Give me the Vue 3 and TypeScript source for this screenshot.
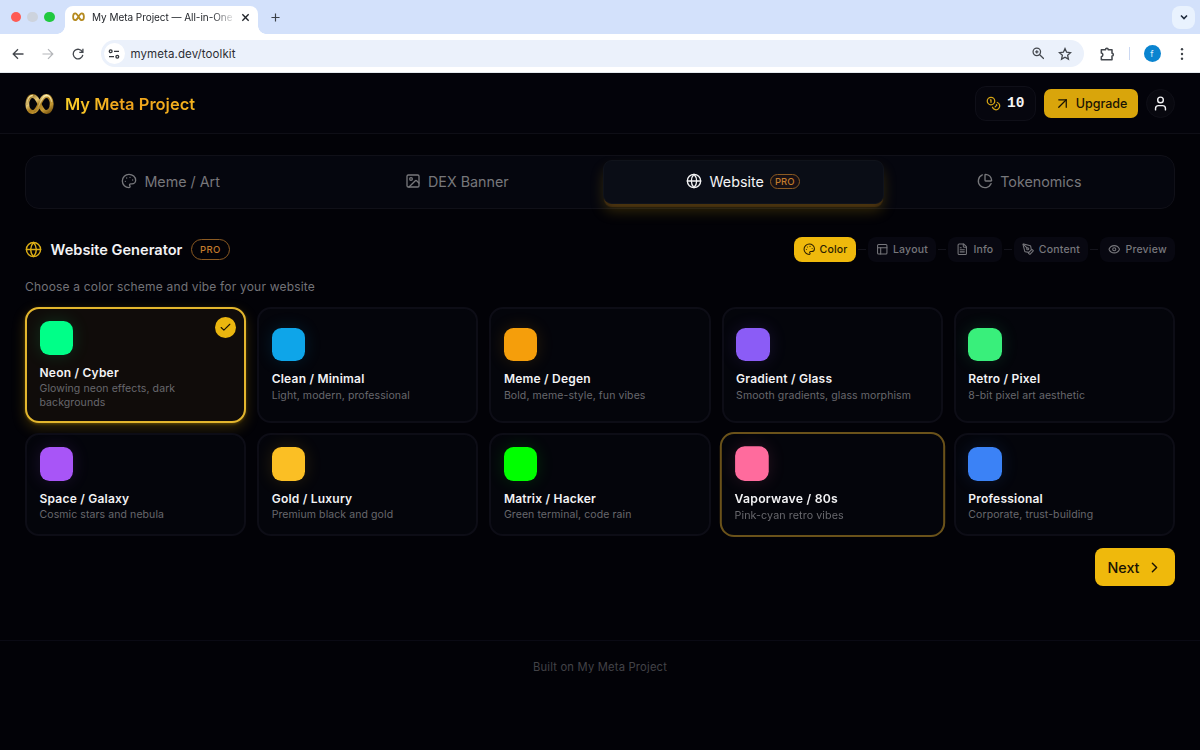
<script setup lang="ts">
type IconName =
  | 'palette' | 'image' | 'globe' | 'chart' | 'layout' | 'file' | 'pen'
  | 'eye' | 'coins' | 'arrow' | 'user' | 'check' | 'chevron'

const icons: Record<IconName, string[]> = {
  palette: [
    'M13.5 6.5h.01', 'M17.5 10.5h.01', 'M8.5 7.5h.01', 'M6.5 12.5h.01',
    'M12 2C6.5 2 2 6.5 2 12s4.5 10 10 10c.926 0 1.648-.746 1.648-1.688 0-.437-.18-.835-.437-1.125-.29-.289-.438-.652-.438-1.125a1.64 1.64 0 0 1 1.668-1.668h1.996c3.051 0 5.555-2.503 5.555-5.554C21.965 6.012 17.461 2 12 2z',
  ],
  image: [
    'M5 3h14a2 2 0 0 1 2 2v14a2 2 0 0 1-2 2H5a2 2 0 0 1-2-2V5a2 2 0 0 1 2-2z',
    'M7 9a2 2 0 1 0 4 0a2 2 0 1 0-4 0', 'm21 15-3.086-3.086a2 2 0 0 0-2.828 0L6 21',
  ],
  globe: ['M2 12a10 10 0 1 0 20 0a10 10 0 1 0-20 0', 'M12 2a14.5 14.5 0 0 0 0 20 14.5 14.5 0 0 0 0-20', 'M2 12h20'],
  chart: [
    'M21 12c.552 0 1.005-.449.95-.998a10 10 0 0 0-8.953-8.951c-.55-.055-.998.398-.998.95v8a1 1 0 0 0 1 1z',
    'M21.21 15.89A10 10 0 1 1 8 2.83',
  ],
  layout: ['M5 3h14a2 2 0 0 1 2 2v14a2 2 0 0 1-2 2H5a2 2 0 0 1-2-2V5a2 2 0 0 1 2-2z', 'M3 9h18', 'M9 21V9'],
  file: [
    'M15 2H6a2 2 0 0 0-2 2v16a2 2 0 0 0 2 2h12a2 2 0 0 0 2-2V7Z', 'M14 2v4a2 2 0 0 0 2 2h4',
    'M10 9H8', 'M16 13H8', 'M16 17H8',
  ],
  pen: [
    'M15.707 21.293a1 1 0 0 1-1.414 0l-1.586-1.586a1 1 0 0 1 0-1.414l5.586-5.586a1 1 0 0 1 1.414 0l1.586 1.586a1 1 0 0 1 0 1.414z',
    'm18 13-1.375-6.874a1 1 0 0 0-.746-.776L3.235 2.028a1 1 0 0 0-1.207 1.207L5.35 15.879a1 1 0 0 0 .776.746L13 18',
    'm2.3 2.3 7.286 7.286', 'M9 11a2 2 0 1 0 4 0a2 2 0 1 0-4 0',
  ],
  eye: [
    'M2.062 12.348a1 1 0 0 1 0-.696 10.75 10.75 0 0 1 19.876 0 1 1 0 0 1 0 .696 10.75 10.75 0 0 1-19.876 0',
    'M9 12a3 3 0 1 0 6 0a3 3 0 1 0-6 0',
  ],
  coins: ['M2 8a6 6 0 1 0 12 0a6 6 0 1 0-12 0', 'M18.09 10.37A6 6 0 1 1 10.34 18', 'M7 6h1v4', 'm16.71 13.88.7.71-2.82 2.82'],
  arrow: ['M6 6h12v12', 'M6 18 18 6'],
  user: ['M19 21v-2a4 4 0 0 0-4-4H9a4 4 0 0 0-4 4v2', 'M8 7a4 4 0 1 0 8 0a4 4 0 1 0-8 0'],
  check: ['M20 6 9 17l-5-5'],
  chevron: ['m9 18 6-6-6-6'],
}

const tabs: { label: string; icon: IconName; active?: boolean; pro?: boolean }[] = [
  { label: 'Meme / Art', icon: 'palette' },
  { label: 'DEX Banner', icon: 'image' },
  { label: 'Website', icon: 'globe', active: true, pro: true },
  { label: 'Tokenomics', icon: 'chart' },
]

const steps: { label: string; icon: IconName }[] = [
  { label: 'Color', icon: 'palette' },
  { label: 'Layout', icon: 'layout' },
  { label: 'Info', icon: 'file' },
  { label: 'Content', icon: 'pen' },
  { label: 'Preview', icon: 'eye' },
]

const schemes = [
  { name: 'Neon / Cyber', desc: 'Glowing neon effects, dark backgrounds', color: '#00ff88', state: 'selected' },
  { name: 'Clean / Minimal', desc: 'Light, modern, professional', color: '#0ea5e9', state: '' },
  { name: 'Meme / Degen', desc: 'Bold, meme-style, fun vibes', color: '#f59e0b', state: '' },
  { name: 'Gradient / Glass', desc: 'Smooth gradients, glass morphism', color: '#8b5cf6', state: '' },
  { name: 'Retro / Pixel', desc: '8-bit pixel art aesthetic', color: '#39ef7b', state: '' },
  { name: 'Space / Galaxy', desc: 'Cosmic stars and nebula', color: '#a855f7', state: '' },
  { name: 'Gold / Luxury', desc: 'Premium black and gold', color: '#fbbf24', state: '' },
  { name: 'Matrix / Hacker', desc: 'Green terminal, code rain', color: '#00ff00', state: '' },
  { name: 'Vaporwave / 80s', desc: 'Pink-cyan retro vibes', color: '#ff6b9d', state: 'hovered' },
  { name: 'Professional', desc: 'Corporate, trust-building', color: '#3b82f6', state: '' },
]
</script>

<template>
  <div class="window">
    <div class="tabstrip">
      <div class="lights"><i class="red"></i><i class="grey"></i><i class="green"></i></div>
      <div class="browser-tab">
        <svg class="fav" viewBox="0 0 30 22">
          <path d="M15 11C12 5.500 10 3 7.500 3C4.500 3 2.500 6.500 2.500 11s2 8 5 8C10 19 12 16.500 15 11S20 3 22.500 3C25.500 3 27.500 6.500 27.500 11s-2 8-5 8C20 19 18 16.500 15 11z" fill="none" stroke="#b58a1f" stroke-width="4.200" />
        </svg>
        <span class="tab-title">My Meta Project — All-in-One</span>
        <svg class="close" viewBox="0 0 10 10"><path d="M1.500 1.500l7 7M8.500 1.500l-7 7" stroke="#1f2329" stroke-width="1.500" /></svg>
      </div>
      <svg class="plus" viewBox="0 0 10 10"><path d="M5 .5v9M.5 5h9" stroke="#3c4147" stroke-width="1.300" /></svg>
      <div class="tab-menu"><svg viewBox="0 0 10 10"><path d="M2 3.500l3 3 3-3" fill="none" stroke="#1f2a3c" stroke-width="1.600" /></svg></div>
    </div>
    <div class="toolbar">
      <div class="nav">
        <svg viewBox="0 0 12 12"><path d="M11.500 6H1.500M6 1.200L1.200 6 6 10.800" fill="none" stroke="#43474d" stroke-width="1.300" /></svg>
        <svg viewBox="0 0 12 12"><path d="M.5 6h10M6 1.200L10.800 6 6 10.800" fill="none" stroke="#b3b5b9" stroke-width="1.200" /></svg>
        <svg viewBox="0 0 12 12"><path d="M10.400 4A4.800 4.800 0 1 0 10.800 6.800M10.900 .8V4.400H7.300" fill="none" stroke="#43474d" stroke-width="1.300" /></svg>
      </div>
      <div class="omnibox">
        <span class="site-info">
          <svg viewBox="0 0 12 12" fill="none" stroke="#33373d" stroke-width="1.300">
            <circle cx="2.700" cy="3.300" r="1.400" /><path d="M6 3.300h5M1 8.700h5" /><circle cx="9.300" cy="8.700" r="1.400" />
          </svg>
        </span>
        <span class="url">mymeta.dev/toolkit</span>
        <svg class="zoomer" viewBox="0 0 13 13" fill="none" stroke="#43474d" stroke-width="1.300"><circle cx="5" cy="5" r="3.900" /><path d="M8 8l4.300 4.300M5 3.300v3.400M3.300 5h3.400" /></svg>
        <svg class="star" viewBox="0 0 24 24"><path d="M12 2.800l2.800 6.200 6.700.7-5 4.500 1.400 6.600L12 17.400l-5.900 3.400 1.400-6.600-5-4.500 6.700-.7z" fill="none" stroke="#43474d" stroke-width="2.200" /></svg>
      </div>
      <svg class="puzzle" viewBox="0 0 24 24"><path d="M3.500 5.500h6.300a2 2 0 0 1 4 0H19.500v5.500a2 2 0 0 1 0 4V20.500H3.500V16a2.800 2.800 0 0 0 0-5.500z" fill="none" stroke="#43474d" stroke-width="2.300" stroke-linejoin="round" /></svg>
      <i class="divider"></i>
      <span class="avatar">f</span>
      <svg class="kebab" viewBox="0 0 4 14" fill="#3f4349"><circle cx="2" cy="2.200" r="1.200" /><circle cx="2" cy="7" r="1.200" /><circle cx="2" cy="11.800" r="1.200" /></svg>
    </div>

    <div class="page">
      <header>
        <svg class="logo" viewBox="0 0 30 22">
          <defs>
            <linearGradient id="gold" x1="0" y1="0" x2="1" y2="1">
              <stop offset="0" stop-color="#8a6414" /><stop offset=".3" stop-color="#e5c878" />
              <stop offset=".5" stop-color="#a87a1c" /><stop offset=".75" stop-color="#c69a35" /><stop offset="1" stop-color="#76520f" />
            </linearGradient>
            <linearGradient id="shine" x1="0" y1="0" x2="0" y2="1">
              <stop offset="0" stop-color="#fff0ae" /><stop offset="1" stop-color="#9d7422" />
            </linearGradient>
          </defs>
          <path d="M15 11C12.800 6 11.200 2.700 8 2.700C4.600 2.700 2.400 6.500 2.400 11s2.200 8.300 5.600 8.300C11.200 19.300 12.800 16 15 11S18.800 2.700 22 2.700C25.400 2.700 27.600 6.500 27.600 11s-2.200 8.300-5.600 8.300C18.800 19.300 17.200 16 15 11z" fill="none" stroke="url(#gold)" stroke-width="4" />
          <path d="M2 12C2 6 4.500 2.200 8 2.200M9 19C12 18.500 13.500 14.500 15.200 10.700S19 2.400 22 2.200C25 2.200 27 5 27.600 9" fill="none" stroke="url(#shine)" stroke-width="1.400" />
        </svg>
        <span class="brand">My Meta Project</span>
        <div class="header-right">
          <div class="credits">
            <svg class="ico" viewBox="0 0 24 24"><path v-for="d in icons.coins" :key="d" :d="d" /></svg>
            <span>10</span>
          </div>
          <button class="upgrade">
            <svg class="ico" viewBox="0 0 24 24"><path v-for="d in icons.arrow" :key="d" :d="d" /></svg>
            <span>Upgrade</span>
          </button>
          <div class="user"><svg class="ico" viewBox="0 0 24 24"><path v-for="d in icons.user" :key="d" :d="d" /></svg></div>
        </div>
      </header>

      <main>
        <nav class="tabs">
          <div v-for="t in tabs" :key="t.label" class="tab" :class="{ active: t.active }">
            <svg class="ico" viewBox="0 0 24 24"><path v-for="d in icons[t.icon]" :key="d" :d="d" /></svg>
            <span>{{ t.label }}</span>
            <em v-if="t.pro" class="pro small">PRO</em>
          </div>
        </nav>

        <div class="title-row">
          <svg class="ico title-icon" viewBox="0 0 24 24"><path v-for="d in icons.globe" :key="d" :d="d" /></svg>
          <h1>Website Generator</h1>
          <em class="pro">PRO</em>
          <div class="steps">
            <template v-for="(s, i) in steps" :key="s.label">
              <i v-if="i > 0" class="dash"></i>
              <div class="step" :class="{ current: i === 0 }">
                <svg class="ico" viewBox="0 0 24 24"><path v-for="d in icons[s.icon]" :key="d" :d="d" /></svg>
                <span>{{ s.label }}</span>
              </div>
            </template>
          </div>
        </div>

        <p class="subtitle">Choose a color scheme and vibe for your website</p>

        <div class="grid">
          <div v-for="s in schemes" :key="s.name" class="card" :class="s.state">
            <div class="swatch" :style="{ background: s.color, boxShadow: `0 0 17px ${s.color}26` }"></div>
            <div class="name">{{ s.name }}</div>
            <div class="desc">{{ s.desc }}</div>
            <span v-if="s.state === 'selected'" class="badge">
              <svg class="ico" viewBox="0 0 24 24"><path v-for="d in icons.check" :key="d" :d="d" /></svg>
            </span>
          </div>
        </div>

        <div class="actions">
          <button class="next">
            <span>Next</span>
            <svg class="ico" viewBox="0 0 24 24"><path v-for="d in icons.chevron" :key="d" :d="d" /></svg>
          </button>
        </div>
      </main>

      <footer>Built on My Meta Project</footer>
    </div>
  </div>
</template>

<style>
body { margin: 0; background: #020207; }
</style>

<style scoped>
* { box-sizing: border-box; }
.window { width: 1200px; height: 750px; overflow: hidden; display: flex; flex-direction: column; font-family: Inter, "Liberation Sans", sans-serif; }
svg { display: block; flex: none; }
button { border: 0; font: inherit; padding: 0; }
.ico { fill: none; stroke: currentColor; stroke-width: 2; stroke-linecap: round; stroke-linejoin: round; }

/* browser frame */
.tabstrip { height: 34px; flex: none; background: #d3e1fb; display: flex; align-items: center; }
.lights { display: flex; gap: 6.300px; margin-left: 10.500px; width: 54.500px; }
.lights i { width: 10.500px; height: 10.500px; border-radius: 50%; }
.red { background: #fe5b54; }
.grey { background: #cdd3dd; }
.green { background: #20c93f; }
.browser-tab { position: relative; width: 193px; height: 28px; margin-top: 6px; background: #fff; border-radius: 8px 8px 0 0; display: flex; align-items: center; padding: 0 8px 6px 7px; }
.browser-tab::before, .browser-tab::after { content: ""; position: absolute; bottom: 0; width: 8px; height: 8px; }
.browser-tab::before { left: -8px; background: radial-gradient(circle at 0 0, transparent 7.500px, #fff 8px); }
.browser-tab::after { right: -8px; background: radial-gradient(circle at 100% 0, transparent 7.500px, #fff 8px); }
.fav { width: 13px; height: 9.500px; }
.tab-title { margin-left: 7px; width: 142px; font-size: 10px; line-height: 14px; letter-spacing: -.04px; color: #23262b; white-space: nowrap; -webkit-mask-image: linear-gradient(90deg, #000 120px, transparent 144px); mask-image: linear-gradient(90deg, #000 120px, transparent 144px); }
.close { width: 9px; height: 9px; margin-left: 7px; }
.plus { width: 9px; height: 9px; margin-left: 12.500px; }
.tab-menu { margin: 0 5px 0 auto; width: 23px; height: 23px; border-radius: 8px; background: #e9f2fe; display: grid; place-items: center; }
.tab-menu svg { width: 10px; height: 10px; }
.toolbar { height: 39px; flex: none; background: #fff; display: flex; align-items: center; box-shadow: inset 0 -1px #e4e9ee; }
.nav { display: flex; gap: 18px; margin-left: 12px; }
.nav svg { width: 12px; height: 12px; }
.omnibox { margin-left: 17px; width: 983px; height: 27px; border-radius: 14px; background: #ebf1fb; display: flex; align-items: center; padding: 0 12px 0 2.500px; }
.site-info { width: 21px; height: 21px; border-radius: 50%; background: #fff; display: grid; place-items: center; }
.site-info svg { width: 12px; height: 12px; }
.url { margin-left: 6px; font-size: 11.500px; color: #2b2e33; letter-spacing: .1px; }
.zoomer { width: 12.500px; height: 12.500px; margin-left: auto; }
.star { width: 14px; height: 14px; margin-left: 14px; }
.puzzle { width: 16px; height: 16px; margin-left: 15px; }
.divider { width: 1px; height: 13px; background: #ccd9f2; margin-left: 14px; }
.avatar { width: 17px; height: 17px; border-radius: 50%; background: #0a84d0; color: #d9efff; font-size: 9px; line-height: 17px; text-align: center; margin-left: 13.500px; }
.kebab { width: 4px; height: 14px; margin-left: 19px; }

/* page */
.page { flex: 1; background: #020207; color: #f2f2f4; display: flex; flex-direction: column; }
header { height: 61px; flex: none; background: #03030a; border-bottom: 1px solid #0e0e16; display: flex; align-items: center; padding: 0 25px; }
.logo { width: 29px; height: 22px; margin-top: 1px; }
.brand { margin: 1px 0 0 11px; font-size: 16.500px; font-weight: 600; background: linear-gradient(90deg, #fcd12a, #f0a31c 45%, #f5b41e); -webkit-background-clip: text; background-clip: text; color: transparent; }
.header-right { margin-left: auto; display: flex; align-items: center; gap: 8px; }
.credits { width: 61px; height: 35px; border: 1px solid #0f0f18; border-radius: 11px; background: #06060e; display: flex; align-items: center; padding-left: 10px; gap: 6px; }
.credits svg { width: 15px; height: 15px; color: #d6a514; }
.credits span { font-family: "Liberation Mono", monospace; font-weight: 700; font-size: 14.500px; color: #f5f5f5; }
.upgrade { width: 94px; height: 29px; border-radius: 7px; background: #d9a50b; color: #1a1304; display: flex; align-items: center; justify-content: center; gap: 6px; font-size: 12.500px; font-weight: 500; }
.upgrade svg { width: 15px; height: 15px; }
.user { width: 29px; height: 29px; border-radius: 50%; background: #08080f; border: 1px solid #0f0f17; display: grid; place-items: center; }
.user svg { width: 17px; height: 17px; }

main { padding: 21px 25px 0; height: 507px; flex: none; border-bottom: 1px solid #0a0a14; }
.tabs { height: 53.500px; border: 1px solid #101018; border-radius: 14px; background: #05060e; display: grid; grid-template-columns: repeat(4, 1fr); gap: 5px; padding: 4px; }
.tab { display: flex; align-items: center; justify-content: center; gap: 7px; color: #77777b; font-size: 14.300px; border-radius: 9px; border: 1px solid transparent; padding-bottom: 1px; }
.tab svg { width: 16px; height: 16px; }
.tab.active { background: #0a0d16; border-color: #10131b; color: #f4f4f5; box-shadow: 0 4px 1px -1px rgba(130, 80, 20, .35), 0 8px 14px -1px rgba(180, 140, 10, .28); }
.pro { font-style: normal; display: inline-flex; align-items: center; justify-content: center; width: 39px; height: 21px; border-radius: 11px; border: 1px solid #8b5a22; color: #c07a2c; font-size: 9.500px; font-weight: 500; letter-spacing: .4px; }
.pro.small { width: 30px; height: 15px; border-radius: 8px; margin-left: -1px; background: #171014; letter-spacing: .1px; font-size: 9.500px; }

.title-row { margin-top: 28px; height: 26px; display: flex; align-items: center; }
.title-icon { width: 17px; height: 17px; color: #dcae16; }
h1 { margin: 0 8.500px; font-size: 14.600px; font-weight: 600; line-height: 20px; }
.steps { margin-left: auto; display: flex; align-items: center; }
.step { height: 25px; border-radius: 8px; background: #080811; color: #77777c; font-size: 10.500px; font-weight: 500; letter-spacing: .2px; display: flex; align-items: center; gap: 4.500px; padding: 0 8.200px; }
.step svg { width: 12.500px; height: 12.500px; }
.step.current { background: #efb90c; color: #2a1d02; }
.dash { width: 8px; height: 1px; margin: 0 2px; background: #14141c; }
.subtitle { margin: 16.500px 0 0; font-size: 12px; line-height: 16px; letter-spacing: .19px; color: #737378; }

.grid { margin-top: 12px; display: grid; grid-template-columns: repeat(5, 1fr); grid-template-rows: 116px 102.500px; column-gap: 11px; row-gap: 10px; }
.card { position: relative; border: 2px solid #0d0d16; border-radius: 14px; background: #04050b; padding: 0 12.500px; display: flex; flex-direction: column; justify-content: center; align-items: flex-start; }
.card.selected { background: #100c0a; border-color: #e3b62e; box-shadow: 0 1px 3px rgba(234, 179, 8, .3), 0 5px 14px rgba(234, 179, 8, .22); }
.card.hovered { border-color: #6a521a; transform: scale(1.020); }
.swatch { width: 33.500px; height: 33.500px; border-radius: 9.500px; }
.name { margin-top: 9px; font-size: 12px; font-weight: 600; line-height: 17px; letter-spacing: .22px; }
.desc { margin-top: 1.500px; font-size: 10.500px; line-height: 13.500px; letter-spacing: .09px; color: #68686d; }
.badge { position: absolute; top: 8px; right: 8px; width: 21px; height: 21px; border-radius: 50%; background: #eab60f; color: #1a1304; display: grid; place-items: center; }
.badge svg { width: 13px; height: 13px; }
.actions { display: flex; justify-content: flex-end; margin-top: 12.500px; }
.next { width: 80px; height: 38px; border-radius: 8px; background: #efb90c; color: #1a1304; display: flex; align-items: center; justify-content: center; gap: 6px; font-size: 14.300px; font-weight: 500; }
.next svg { width: 17px; height: 17px; }
footer { text-align: center; padding-top: 18px; font-size: 11.200px; line-height: 16px; letter-spacing: .2px; color: #434348; }
</style>
